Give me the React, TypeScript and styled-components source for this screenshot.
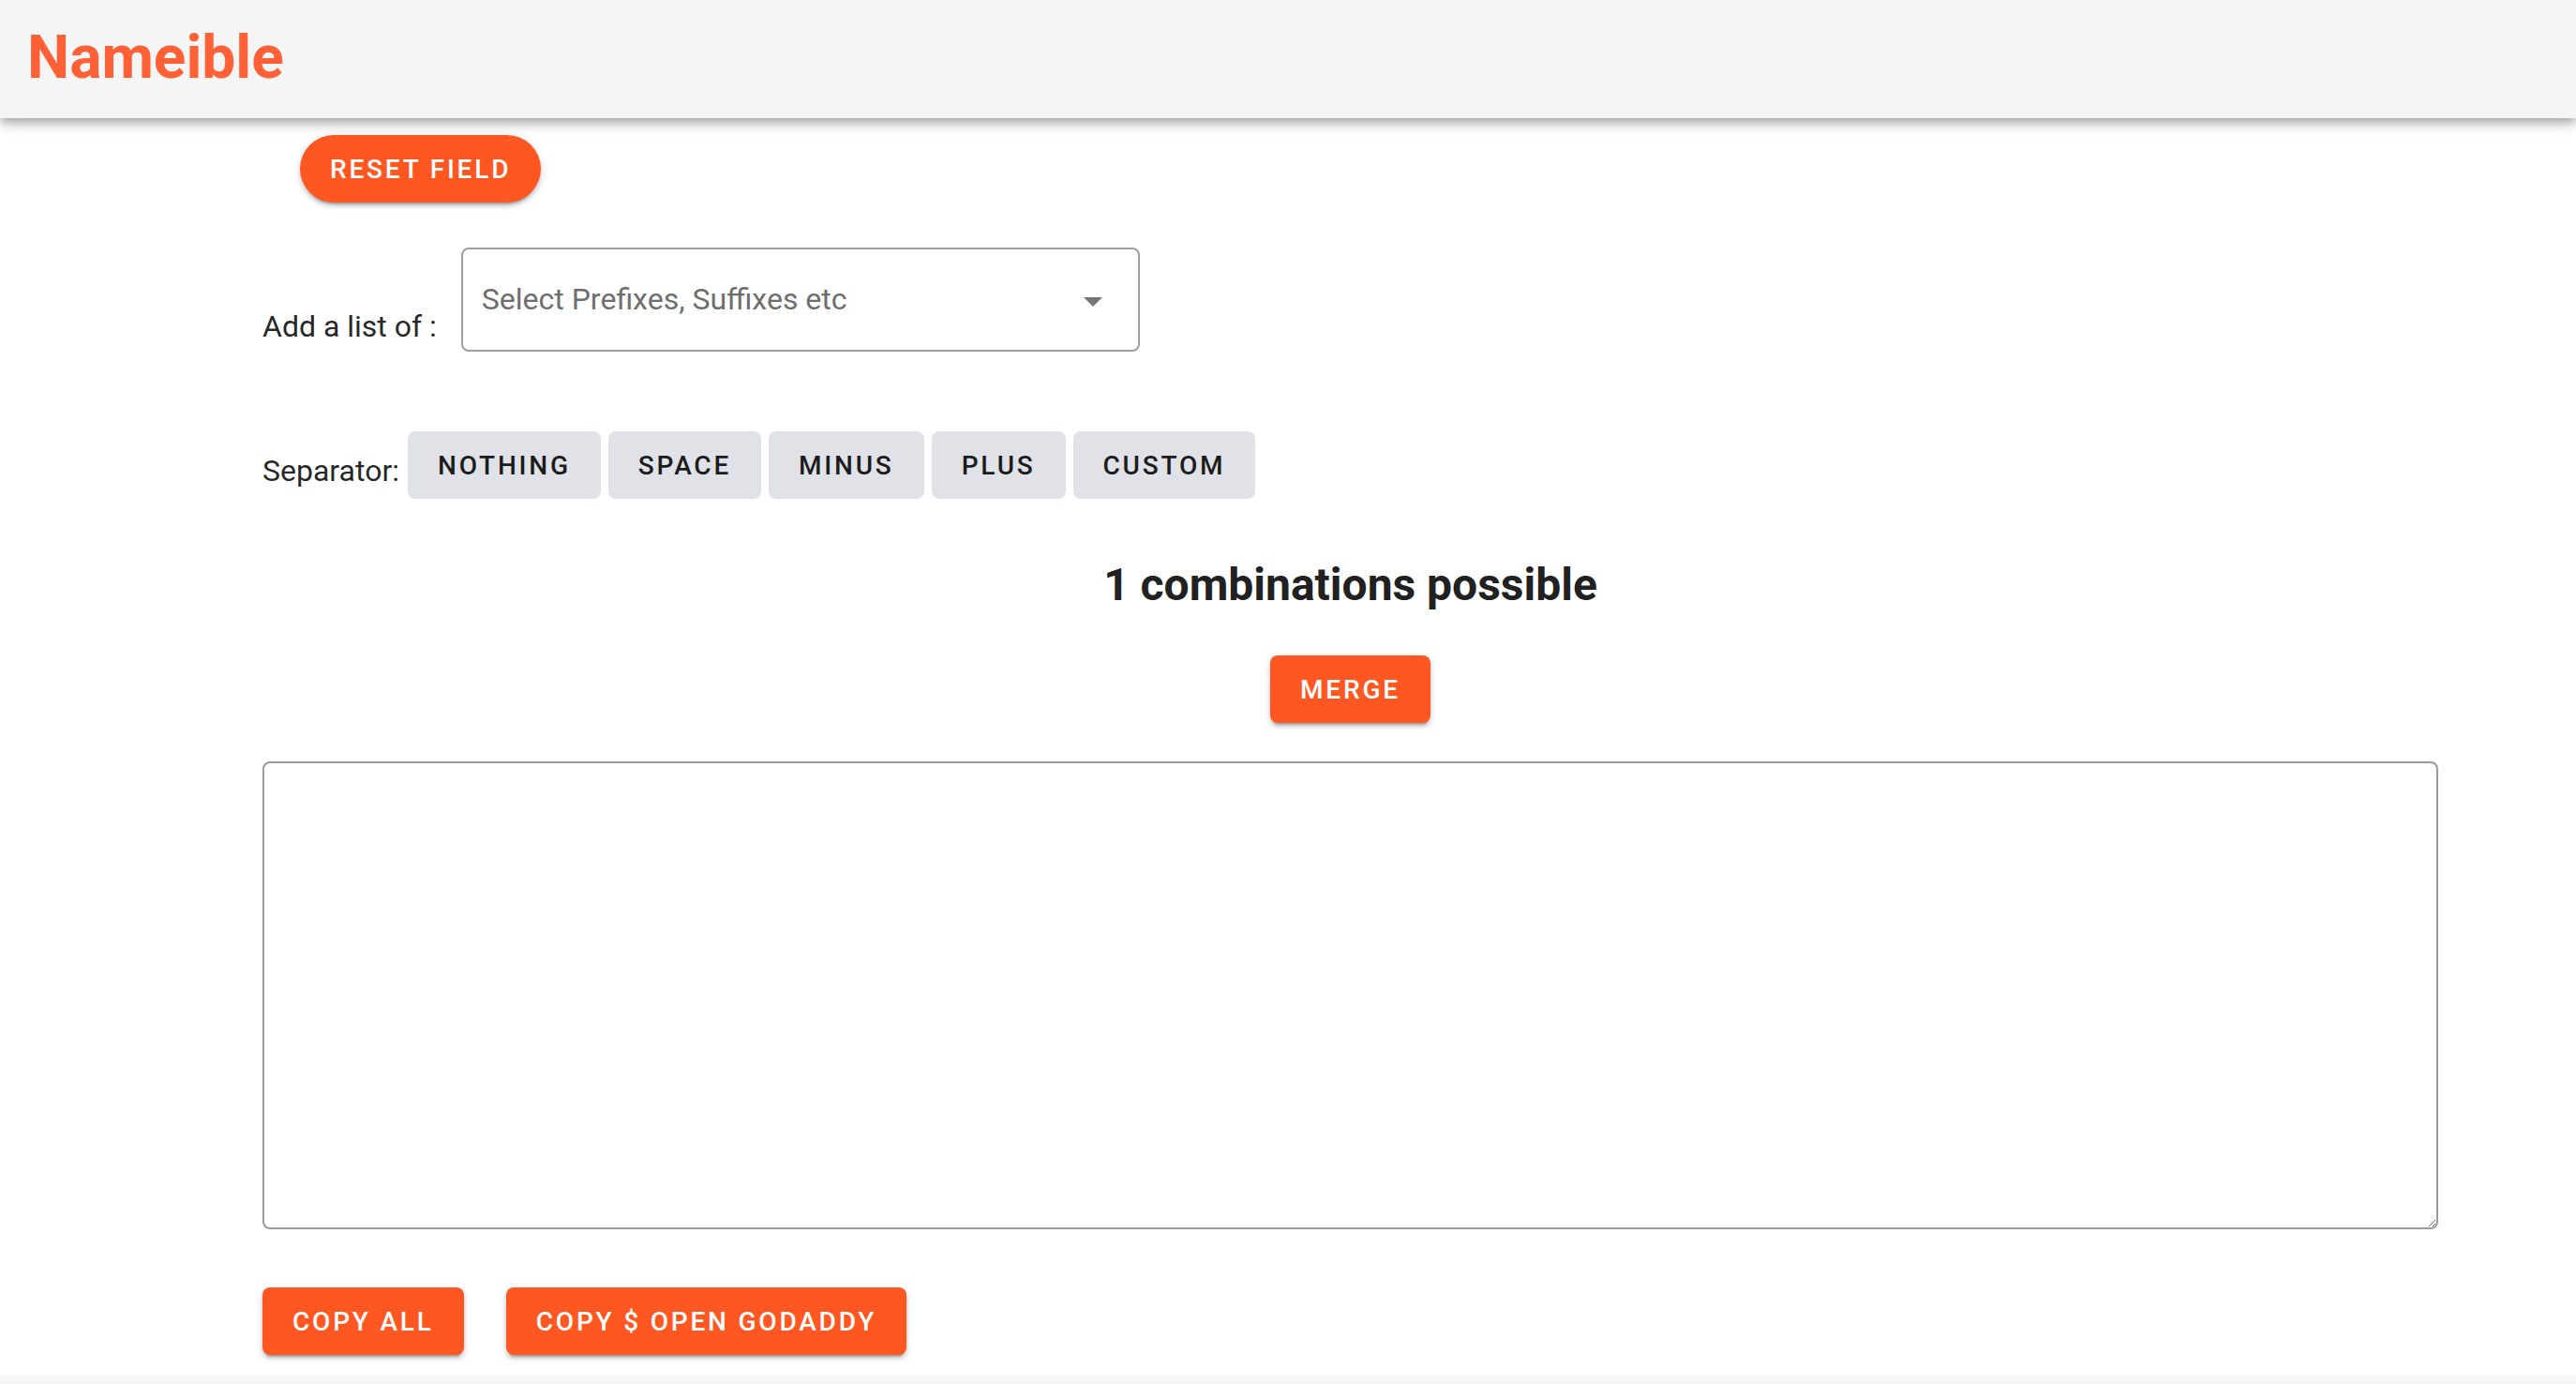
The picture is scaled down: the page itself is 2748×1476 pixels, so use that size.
import React from "react";
import styled, { createGlobalStyle } from "styled-components";

const GlobalStyle = createGlobalStyle`
  html, body {
    margin: 0;
    padding: 0;
    background: #ffffff;
    font-family: Roboto, "Liberation Sans", Arial, sans-serif;
    overflow: hidden;
  }
  * { box-sizing: border-box; }
`;

const Page = styled.div`
  display: flex;
  flex-direction: column;
  height: 1476px;
`;

const AppBar = styled.header`
  flex: 0 0 126px;
  display: flex;
  align-items: center;
  padding: 0 0 4px 29px;
  background: #f5f5f5;
  box-shadow: 0 4px 8px -2px rgba(0, 0, 0, 0.2), 0 8px 10px 0 rgba(0, 0, 0, 0.14),
    0 2px 20px 0 rgba(0, 0, 0, 0.12);
  position: relative;
  z-index: 2;
`;

const Brand = styled.h1`
  margin: 0;
  font-size: 64px;
  font-weight: 700;
  color: #ff6036;
  letter-spacing: 0;
`;

const Main = styled.main`
  flex: 1;
  display: flex;
  flex-direction: column;
  align-items: flex-start;
  padding: 0 147px 0 280px;
`;

const Button = styled.button<{ $pill?: boolean }>`
  height: 72px;
  padding: 0 32px;
  border: none;
  border-radius: ${(p) => (p.$pill ? "36px" : "8px")};
  background: #ff5722;
  color: #ffffff;
  font-family: Roboto, "Liberation Sans", Arial, sans-serif;
  font-size: 28px;
  font-weight: 500;
  letter-spacing: 2.8px;
  text-transform: uppercase;
  box-shadow: 0 6px 2px -4px rgba(0, 0, 0, 0.2), 0 4px 4px 0 rgba(0, 0, 0, 0.14),
    0 2px 10px 0 rgba(0, 0, 0, 0.12);
  cursor: pointer;
`;

const ResetButton = styled(Button)`
  margin: 18px 0 0 40px;
`;

const ListRow = styled.div`
  display: flex;
  align-items: flex-end;
  gap: 26px;
  margin-top: 48px;
`;

const Label = styled.span<{ $drop?: number }>`
  font-size: 32px;
  line-height: 48px;
  color: rgba(0, 0, 0, 0.87);
  margin-bottom: ${(p) => p.$drop ?? 0}px;
`;

const SelectBox = styled.div`
  width: 724px;
  height: 111px;
  display: flex;
  align-items: center;
  justify-content: space-between;
  padding: 0 38px 0 20px;
  border: 2px solid #9e9e9e;
  border-radius: 8px;
  background: #fff;
`;

const Placeholder = styled.span`
  font-size: 32px;
  color: #6e6e6e;
  margin-bottom: 2px;
`;

const Caret = styled.svg`
  width: 20px;
  height: 10px;
  margin-top: 5px;
  fill: #757575;
`;

const SeparatorRow = styled.div`
  display: flex;
  align-items: flex-end;
  margin-top: 85px;
`;

const Chips = styled.div`
  display: flex;
  gap: 8px;
  margin-left: 9px;
`;

const Chip = styled.button`
  height: 72px;
  padding: 0 32px;
  border: none;
  border-radius: 8px;
  background: #e0e2e8;
  color: #1c1c1c;
  font-family: Roboto, "Liberation Sans", Arial, sans-serif;
  font-size: 28px;
  font-weight: 500;
  letter-spacing: 2.8px;
  text-transform: uppercase;
  cursor: pointer;
`;

const Center = styled.div`
  align-self: stretch;
  display: flex;
  flex-direction: column;
  align-items: center;
`;

const Count = styled.h2`
  margin: 63px 0 0;
  font-size: 48px;
  line-height: 58px;
  font-weight: 700;
  color: #212121;
`;

const MergeButton = styled(Button)`
  margin-top: 46px;
`;

const Output = styled.textarea`
  align-self: stretch;
  height: 499px;
  margin-top: 41px;
  border: 2px solid #9a9a9a;
  border-radius: 8px;
  font-family: Roboto, "Liberation Sans", Arial, sans-serif;
  font-size: 28px;
  padding: 8px;
  outline: none;
  background: #fff;
`;

const Actions = styled.div`
  display: flex;
  gap: 45px;
  margin-top: 62px;
`;

const Footer = styled.footer`
  flex: 0 0 9px;
  background: #f5f5f5;
`;

const separators = ["Nothing", "Space", "Minus", "Plus", "Custom"];

export default function App() {
  return (
    <>
      <GlobalStyle />
      <Page>
        <AppBar>
          <Brand>Nameible</Brand>
        </AppBar>
        <Main>
          <ResetButton $pill>Reset Field</ResetButton>
          <ListRow>
            <Label $drop={3}>Add a list of :</Label>
            <SelectBox>
              <Placeholder>Select Prefixes, Suffixes etc</Placeholder>
              <Caret viewBox="0 0 20 10">
                <path d="M0 0 L20 0 L10 10 Z" />
              </Caret>
            </SelectBox>
          </ListRow>
          <SeparatorRow>
            <Label $drop={6}>Separator:</Label>
            <Chips>
              {separators.map((s) => (
                <Chip key={s}>{s}</Chip>
              ))}
            </Chips>
          </SeparatorRow>
          <Center>
            <Count>1 combinations possible</Count>
            <MergeButton>Merge</MergeButton>
          </Center>
          <Output />
          <Actions>
            <Button>Copy All</Button>
            <Button>Copy $ Open GoDaddy</Button>
          </Actions>
        </Main>
        <Footer />
      </Page>
    </>
  );
}
